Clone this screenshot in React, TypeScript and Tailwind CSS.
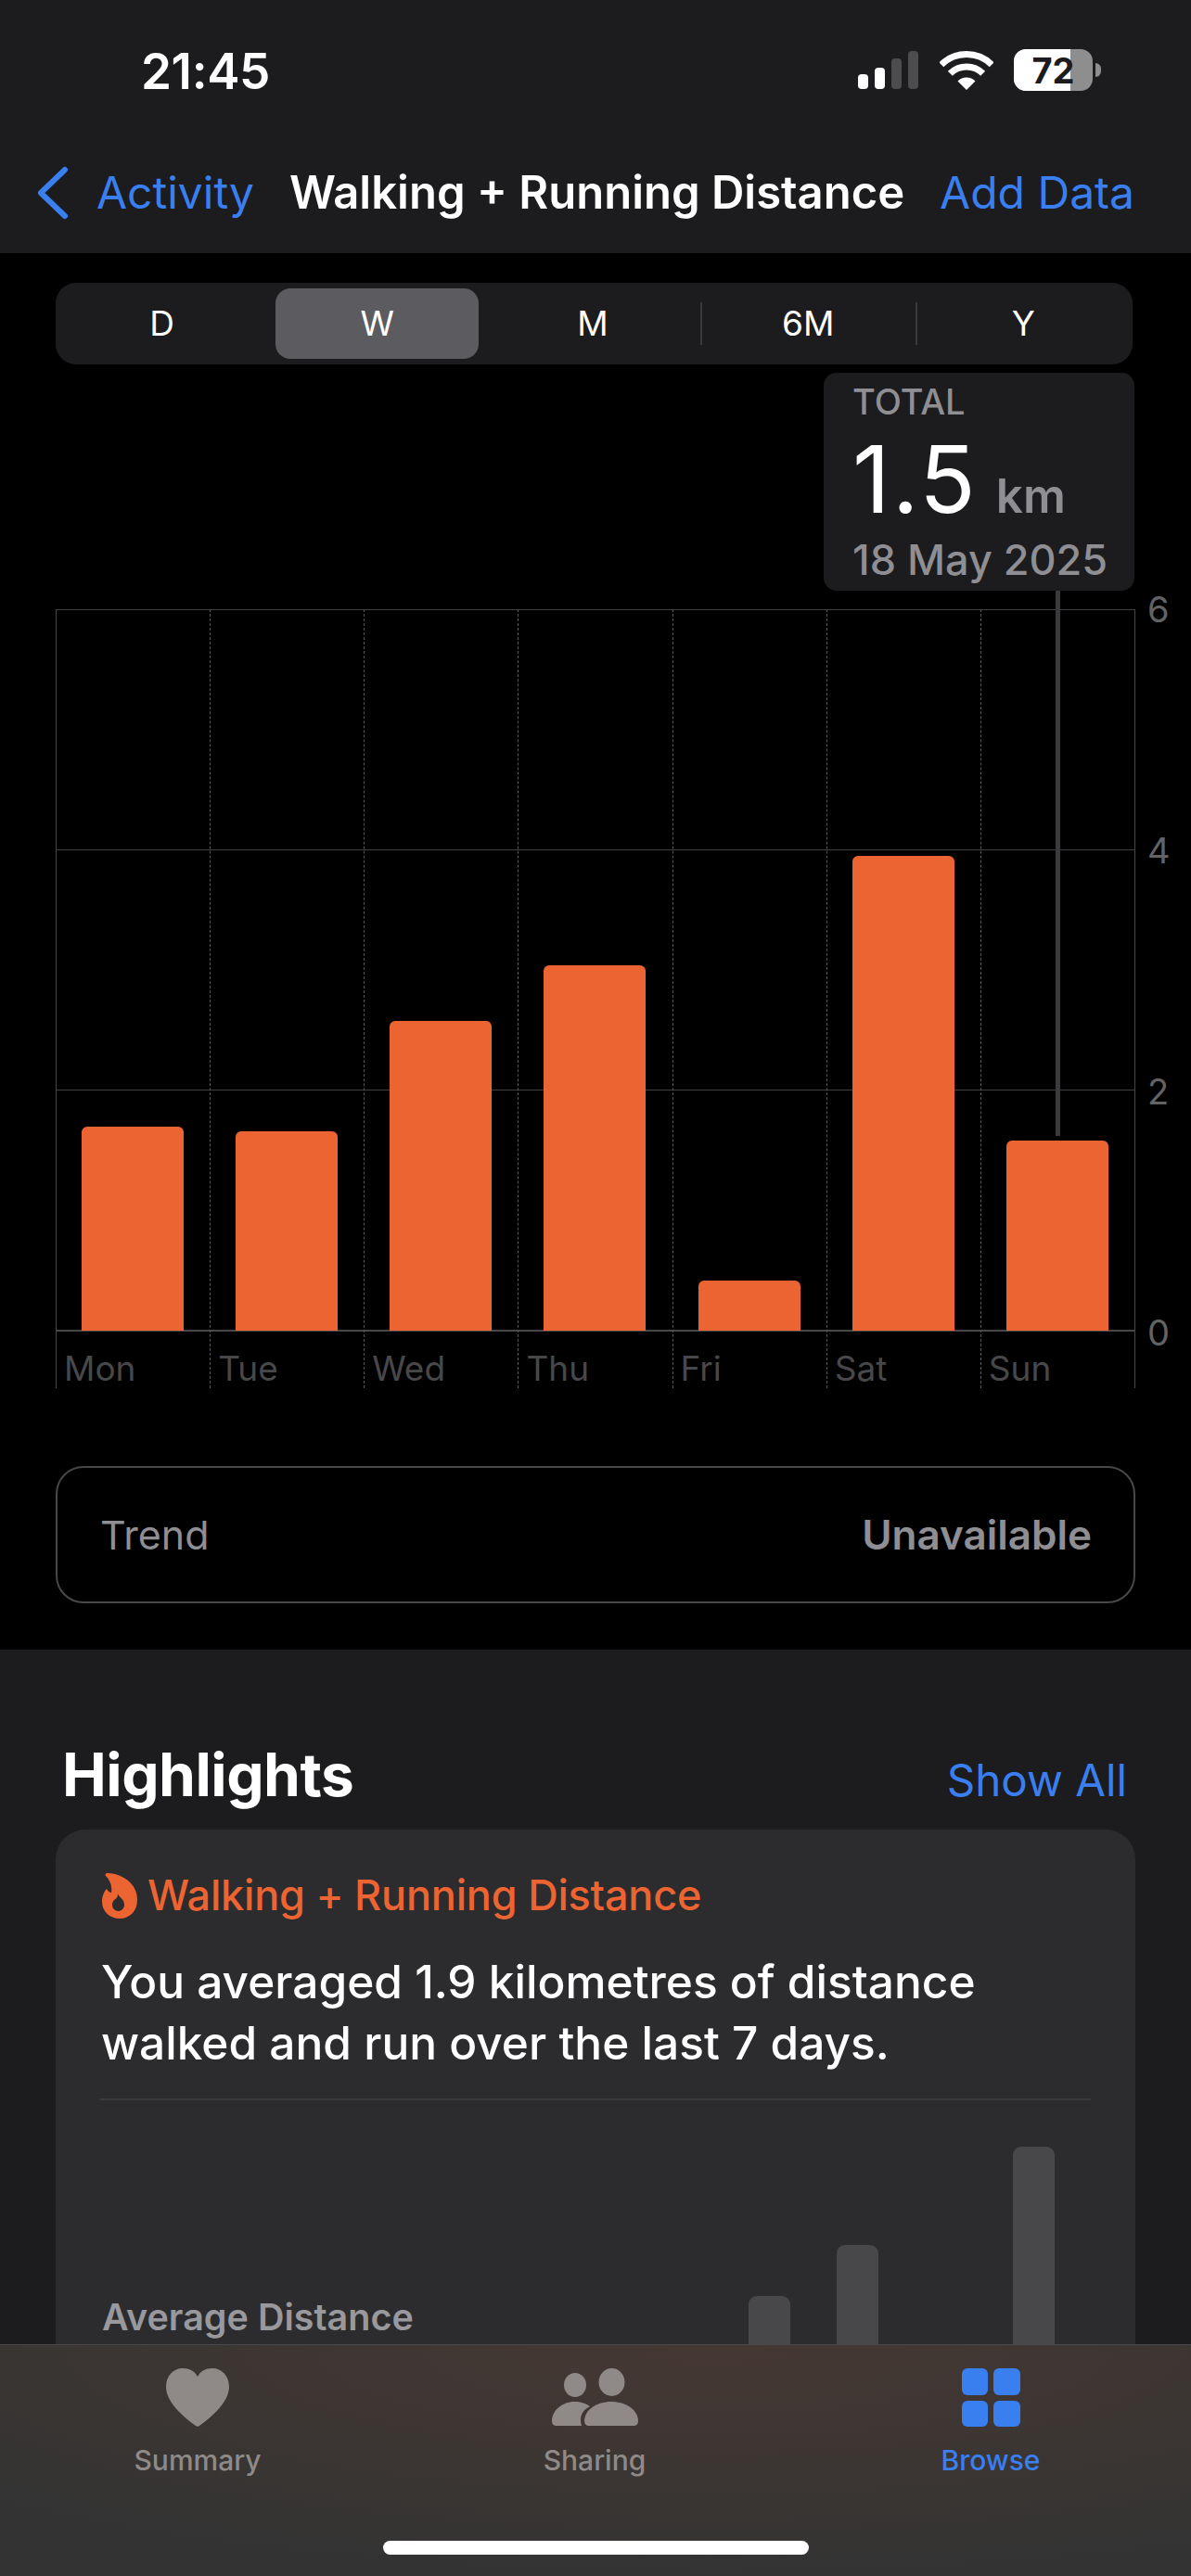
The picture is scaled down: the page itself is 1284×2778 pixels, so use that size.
const ranges = ["D", "W", "M", "6M", "Y"];

const days = [
  { label: "Mon", bar: "h-[220px]", line: "border-solid border-[#48484a]" },
  { label: "Tue", bar: "h-[215px]", line: "border-dashed border-[#58585a]" },
  { label: "Wed", bar: "h-[334px]", line: "border-dashed border-[#58585a]" },
  { label: "Thu", bar: "h-[394px]", line: "border-dashed border-[#58585a]" },
  { label: "Fri", bar: "h-[54px]", line: "border-dashed border-[#58585a]" },
  { label: "Sat", bar: "h-[512px]", line: "border-dashed border-[#58585a]" },
  { label: "Sun", bar: "h-[205px]", line: "border-dashed border-[#58585a]" },
];

const StatusBar = () => (
  <div className="flex h-[150px] items-start justify-between pl-[152px] pr-[97px] pt-[47px]">
    <span className="text-[53px] font-semibold leading-[60px] tracking-[-0.4px] text-white">21:45</span>
    <div className="flex items-center pt-[6px]">
      <div className="flex h-[41px] items-end gap-[7px]">
        <div className="h-[16px] w-[11px] rounded-[4px] bg-white" />
        <div className="h-[23px] w-[11px] rounded-[4px] bg-white" />
        <div className="h-[33px] w-[11px] rounded-[4px] bg-[#4c4c4e]" />
        <div className="h-[41px] w-[11px] rounded-[4px] bg-[#4c4c4e]" />
      </div>
      <svg className="ml-[23px]" width="58" height="42" viewBox="0 0 58 42">
        <path d="M1.8 14.8 A38.5 38.5 0 0 1 56.2 14.8" fill="none" stroke="#fff" strokeWidth="7" />
        <path d="M11.3 24.3 A25 25 0 0 1 46.7 24.3" fill="none" stroke="#fff" strokeWidth="7" />
        <path d="M29 42 L19.5 32.5 A13.4 13.4 0 0 1 38.5 32.5 Z" fill="#fff" />
      </svg>
      <div className="ml-[22px] flex items-center">
        <div className="relative h-[45px] w-[85px] overflow-hidden rounded-[13px] bg-[#8e8e8e]">
          <div className="h-full w-[61px] bg-white" />
          <span className="absolute inset-0 flex items-center justify-center text-[38px] font-bold leading-none text-[#1c1c1e]">72</span>
        </div>
        <div className="ml-[3px] h-[15px] w-[6px] rounded-r-full bg-[#8e8e8e]" />
      </div>
    </div>
  </div>
);

const NavBar = () => (
  <div className="flex h-[123px] items-start justify-between pl-[40px] pr-[61px] pt-[28px] text-[48px] leading-[60px] text-[#3a7ff0]">
    <div className="flex items-center">
      <svg width="34" height="58" viewBox="0 0 34 58" fill="none" stroke="#3a7ff0" strokeWidth="6" strokeLinecap="round" strokeLinejoin="round">
        <path d="M30 4 L4 29 L30 54" />
      </svg>
      <span className="ml-[30px]">Activity</span>
    </div>
    <span className="text-[49px] font-semibold text-white">Walking + Running Distance</span>
    <span>Add Data</span>
  </div>
);

const RangePicker = () => (
  <div className="ml-[60px] mr-[63px] flex h-[88px] items-center rounded-[22px] bg-[#1c1c1e]">
    {ranges.map((r, i) => (
      <div key={r} className="relative flex-1 pr-[3px]">
        <div className={`mx-auto flex h-[76px] w-[219px] items-center justify-center rounded-[16px] text-[37px] text-white ${r === "W" ? "bg-[#5c5c60]" : ""}`}>
          {r}
        </div>
        {i > 2 && <div className="absolute left-[-2px] top-[15px] h-[46px] w-[2px] bg-[#3a3a3c]" />}
      </div>
    ))}
  </div>
);

const Chart = () => (
  <div className="ml-[60px] mt-[264px] flex">
    <div className="relative w-[1164px] border-r border-[#48484a]">
      {/* grid lines, they sit behind the bars */}
      <div className="absolute left-0 right-0 top-0 h-[779px]">
        <div className="absolute left-0 right-0 top-0 h-px bg-[#414143]" />
        <div className="absolute left-0 right-0 top-[259px] h-px bg-[#414143]" />
        <div className="absolute left-0 right-0 top-[518px] h-px bg-[#414143]" />
        <div className="absolute bottom-0 left-0 right-0 h-[2px] bg-[#48484a]" />
      </div>

      <div className="relative grid grid-cols-7">
        {days.map((d) => (
          <div key={d.label} className={`flex flex-col border-l ${d.line}`}>
            <div className="flex h-[778px] items-end justify-center pr-px">
              <div className={`w-[110px] rounded-t-[6px] bg-[#ec6431] ${d.bar}`} />
            </div>
            <div className="h-[62px] pl-[8px] pt-[19px] text-[37px] leading-[44px] text-[#48484a]">{d.label}</div>
          </div>
        ))}
      </div>

      {/* selection callout over the Sunday bar */}
      <div className="absolute right-0 top-[-255px] h-[235px] w-[335px] rounded-[14px] bg-[#1c1c1e] pl-[31px]">
        <div className="pt-[9px] text-[38px] font-medium leading-[44px] text-[#8e8e93]">TOTAL</div>
        <div className="mt-[7px] flex items-baseline">
          <span className="text-[100px] font-normal leading-[110px] tracking-[2px] text-white">1.5</span>
          <span className="ml-[20px] text-[51px] font-semibold leading-none text-[#8e8e93]">km</span>
        </div>
        <div className="mt-[6px] text-[45px] font-medium leading-[52px] text-[#8e8e93]">18 May 2025</div>
      </div>
      <div className="absolute left-[1078px] top-[-20px] h-[588px] w-[5px] bg-[#3a3a3c]" />
    </div>

    <div className="ml-[13px] mt-[-19px] flex h-[818px] flex-col justify-between text-[38px] leading-[38px] text-[#636366]">
      <span>6</span>
      <span>4</span>
      <span>2</span>
      <span>0</span>
    </div>
  </div>
);

const Flame = () => (
  <svg width="38" height="49" viewBox="0 0 38 49" fill="#ec6431" fillRule="evenodd">
    <path d="M6 0 C17 0 38 8 38 29 C38 41 30 49 19 49 C8 49 0 41 0 31 C0 25 2 20 5 17 C6 19 8 21 10 21 C11 14 9 8 4 3 C3 1 4 0 6 0 Z M17 22 C18 26 24 28 24 34 C24 38 21 41 17.5 41 C14 41 11 38 11 34 C11 32 12 30 13 29 C15 28 17 26 17 22 Z" />
  </svg>
);

const HighlightCard = () => (
  <div className="ml-[60px] mr-[60px] mt-[19px] rounded-[32px] bg-[#2c2c2e] pl-[50px]">
    <div className="flex items-center pt-[45px]">
      <Flame />
      <span className="ml-[11px] text-[45px] font-medium leading-[52px] tracking-[-0.2px] text-[#ec6431]">Walking + Running Distance</span>
    </div>
    <div className="ml-[-1px] mt-[34px] text-[49.6px] font-medium leading-[66px] text-white">
      You averaged 1.9 kilometres of distance
      <br />
      walked and run over the last 7 days.
    </div>
    <div className="ml-[-2px] mr-[48px] mt-[27px] h-[2px] bg-[#3a3a3c]" />
    <div className="flex justify-between pr-[87px]">
      <div className="pt-[211px] text-[39.5px] font-semibold leading-[46px] text-[#98989d]">Average Distance</div>
      <div className="flex h-[334px] items-end gap-[50px]">
        <div className="h-[123px] w-[45px] rounded-t-[9px] bg-[#48484a]" />
        <div className="h-[178px] w-[45px] rounded-t-[9px] bg-[#48484a]" />
        <div className="h-0 w-[45px]" />
        <div className="h-[284px] w-[45px] rounded-t-[9px] bg-[#48484a]" />
      </div>
    </div>
  </div>
);

const TabBar = () => (
  <div className="absolute bottom-0 left-0 right-0 h-[250px] border-t border-[#4a4a4c] bg-[radial-gradient(ellipse_85%_100%_at_60%_0%,#463833_0%,#3c3633_50%,#333333_100%)]">
    <div className="grid grid-cols-3 pt-[25px]">
      <div className="flex flex-col items-center pr-[2px] text-[#8f8a87]">
        <svg width="68" height="63" viewBox="0 0 68 63" fill="#8f8a87">
          <path d="M34 9 C37 3 43 0 50 0 C60 0 68 8 68 20 C68 36 50 52 36 62 C35 63 33 63 32 62 C18 52 0 36 0 20 C0 8 8 0 18 0 C25 0 31 3 34 9 Z" />
        </svg>
        <span className="mt-[18px] text-[30px] font-medium leading-[36px]">Summary</span>
      </div>
      <div className="flex flex-col items-center pr-[2px] text-[#8f8a87]">
        <svg width="93" height="63" viewBox="0 0 93 63" fill="#8f8a87">
          <ellipse cx="64.5" cy="15" rx="14" ry="15" />
          <ellipse cx="25" cy="18" rx="12" ry="13" />
          <path d="M35 57 C35 45 48 36 64 36 C80 36 93 45 93 57 C93 60 91 62 88 62 H40 C37 62 35 60 35 57 Z" />
          <path d="M0 57 C0 45 12 36 24 36 C31 36 37 38 41 41 C33 45 29 52 32 62 H5 C2 62 0 60 0 57 Z" />
        </svg>
        <span className="mt-[18px] text-[30px] font-medium leading-[36px]">Sharing</span>
      </div>
      <div className="flex flex-col items-center pr-[4px] text-[#3a7ff0]">
        <div className="grid h-[63px] w-[63px] grid-cols-2 gap-[6px]">
          <div className="rounded-[6px] bg-[#3a7ff0]" />
          <div className="rounded-[6px] bg-[#3a7ff0]" />
          <div className="rounded-[6px] bg-[#3a7ff0]" />
          <div className="rounded-[6px] bg-[#3a7ff0]" />
        </div>
        <span className="mt-[18px] text-[30px] font-medium leading-[36px]">Browse</span>
      </div>
    </div>
    <div className="ml-[413px] mt-[69px] h-[15px] w-[459px] rounded-full bg-white" />
  </div>
);

export default function App() {
  return (
    <div className="relative h-[2778px] w-[1284px] overflow-hidden bg-black font-['Inter','Liberation_Sans',sans-serif]">
      <div className="h-[273px] bg-[#1c1c1e]">
        <StatusBar />
        <NavBar />
      </div>

      <div className="h-[1506px] pt-[32px]">
        <RangePicker />
        <Chart />
        <div className="mx-[60px] mt-[84px] flex h-[148px] items-center justify-between rounded-[30px] border-2 border-[#48484a] pl-[46px] pr-[45px]">
          <span className="text-[43px] text-[#8e8e93]">Trend</span>
          <span className="text-[44px] font-semibold text-[#8e8e93]">Unavailable</span>
        </div>
      </div>

      <div className="h-[999px] bg-[#1c1c1e]">
        <div className="flex items-baseline justify-between pl-[67px] pr-[69px] pt-[95px]">
          <span className="text-[64px] font-bold leading-[80px] tracking-[-0.5px] text-white">Highlights</span>
          <span className="text-[47.5px] leading-[56px] text-[#3a7ff0]">Show All</span>
        </div>
        <HighlightCard />
      </div>

      <TabBar />
    </div>
  );
}
